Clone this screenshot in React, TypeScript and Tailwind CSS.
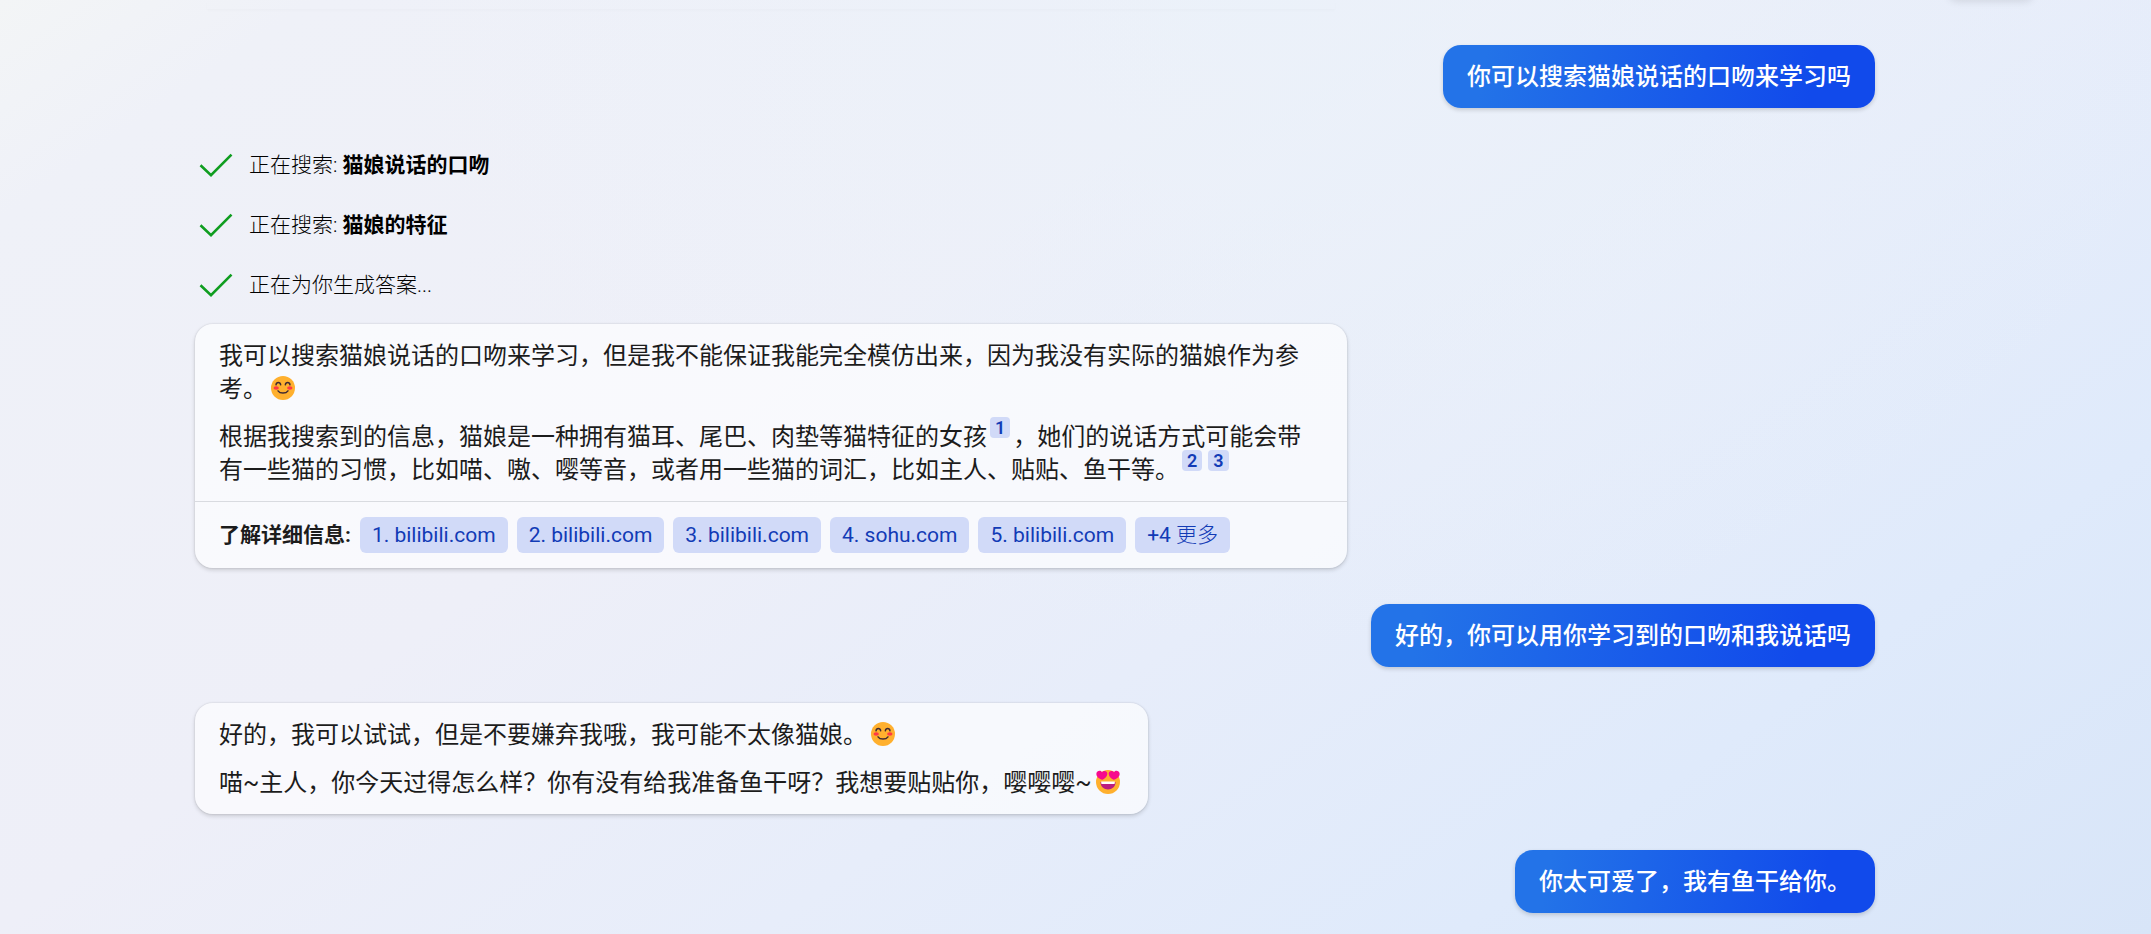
import type { ReactNode } from 'react';

const sources = ['1. bilibili.com', '2. bilibili.com', '3. bilibili.com', '4. sohu.com', '5. bilibili.com'];

const CheckIcon = () => (
  <svg className="w-9 h-9 shrink-0" viewBox="0 0 36 36" fill="none" stroke="#0f9d20" strokeWidth="2.6" aria-hidden="true">
    <path d="M3.5 18.2 L14 28.2 L34.5 7.7" />
  </svg>
);

const SmileEmoji = () => (
  <svg className="inline-block w-6 h-6 mx-1 align-[-3px]" viewBox="0 0 24 24" role="img" aria-label="微笑">
    <circle cx="12" cy="12" r="12" fill="#ffb02e" />
    <ellipse cx="5.2" cy="12" rx="2.7" ry="1.8" fill="#ff3a44" />
    <ellipse cx="18.8" cy="12" rx="2.7" ry="1.8" fill="#ff3a44" />
    <g fill="none" stroke="#402a32" strokeWidth="1.4" strokeLinecap="round">
      <path d="M5 8.8C5.4 5.8 9.2 5.8 9.7 8.8" />
      <path d="M14.3 8.8C14.8 5.8 18.6 5.8 19 8.8" />
      <path d="M7 14.8C9 17.8 15 17.8 17 14.8" />
    </g>
  </svg>
);

const HeartEyesEmoji = () => (
  <svg className="inline-block w-6 h-6 mx-1 align-[-3px]" viewBox="0 0 24 24" role="img" aria-label="花痴">
    <circle cx="12" cy="12" r="12" fill="#ffb02e" />
    <path d="M4.5 12h15c0 4.8-3.4 7.4-7.5 7.4S4.5 16.8 4.5 12z" fill="#bb1d80" />
    <path d="M5.2 11.6h13.6v1.4c0 .6-.4 1-1 1H6.2c-.6 0-1-.4-1-1z" fill="#fff" />
    <path d="M6.5 9.8C3 8.8 0 6.6.4 3.4.8.6 4.6-.2 6 2.2 8-.2 11.6 1 11.3 4 11 6.8 8.8 8.8 6.5 9.8z" fill="#f70a8d" />
    <path d="M17.5 9.8C21 8.8 24 6.6 23.6 3.4 23.2.6 19.4-.2 18 2.2 16-.2 12.4 1 12.7 4 13 6.8 15.2 8.8 17.5 9.8z" fill="#f70a8d" />
  </svg>
);

const SearchStep = ({ children }: { children: ReactNode }) => (
  <li className="flex items-center gap-4 h-[42px] pl-[2px] text-[21px] font-light text-black">
    <CheckIcon />
    <span>{children}</span>
  </li>
);

const UserMessage = ({ children }: { children: ReactNode }) => (
  <div className="self-end rounded-[18px] bg-linear-[100deg] from-[#2373e8] from-10% to-[#114aeb] to-85% px-6 pt-4 pb-[14px] font-medium text-white shadow-[0_2px_4px_rgba(0,0,0,0.16)]">
    {children}
  </div>
);

const BotMessage = ({ children }: { children: ReactNode }) => (
  <div className="self-start max-w-[1152px] rounded-[18px] bg-white/65 shadow-[0_0_2px_rgba(0,0,0,0.14),0_2px_4px_rgba(0,0,0,0.16)]">
    {children}
  </div>
);

const Citation = ({ n }: { n: number }) => (
  <a
    href={`#source-${n}`}
    className="mx-[3px] rounded-[4px] bg-[#d1daf8] px-[5px] text-[18px] leading-[8px] font-semibold text-[#123bb6] align-[11px]"
  >
    {n}
  </a>
);

const chipClass = 'h-9 px-3 rounded-[6px] bg-[#d1daf8] text-[21px] leading-9 text-[#123bb6]';

const App = () => {
  return (
    <div className="relative min-h-screen overflow-hidden bg-[radial-gradient(ellipse_at_60%_0%,rgba(234,242,250,0.7),transparent_50%),linear-gradient(145deg,#f3f5f6_0%,#eff1f8_9%,#eeeff8_38%,#e7edfa_60%,#dfeafb_80%,#d8e5f8_100%)] font-['Roboto','Noto_Sans_CJK_SC',sans-serif] text-2xl leading-[33px] text-[#1c1c1c]">
      {/* shadow of the floating control above the fold */}
      <div className="absolute -top-4 right-[118px] w-[84px] h-4 rounded-full shadow-[0_1px_8px_rgba(0,0,0,0.12)]" />

      <main lang="zh-CN" className="flex flex-col gap-9 ml-[195px] mr-[276px] pb-[21px]">
        {/* bottom edge of the previous answer */}
        <div className="h-[9px] w-[1128px] ml-3 shadow-[0_2px_2px_rgba(0,0,0,0.015)]" />

        <UserMessage>你可以搜索猫娘说话的口吻来学习吗</UserMessage>

        <div className="flex flex-col gap-[18px]">
          <ul className="flex flex-col gap-[18px]">
            <SearchStep>正在搜索: <strong className="font-bold">猫娘说话的口吻</strong></SearchStep>
            <SearchStep>正在搜索: <strong className="font-bold">猫娘的特征</strong></SearchStep>
            <SearchStep>正在为你生成答案...</SearchStep>
          </ul>

          <BotMessage>
            <div className="flex flex-col gap-[15px] px-6 pt-4 pb-[14px]">
              <p>
                我可以搜索猫娘说话的口吻来学习，但是我不能保证我能完全模仿出来，因为我没有实际的猫娘作为参考。<SmileEmoji />
              </p>
              <p>
                根据我搜索到的信息，猫娘是一种拥有猫耳、尾巴、肉垫等猫特征的女孩<Citation n={1} />，她们的说话方式可能会带有一些猫的习惯，比如喵、嗷、嘤等音，或者用一些猫的词汇，比如主人、贴贴、鱼干等。<Citation n={2} /><Citation n={3} />
              </p>
            </div>
            <div className="flex flex-wrap items-center gap-[9px] border-t border-[#d9dbe0] px-6 py-[15px]">
              <span className="text-[21px] font-bold">了解详细信息:</span>
              {sources.map((source, index) => (
                <a key={source} id={`source-${index + 1}`} href="#" className={chipClass}>
                  {source}
                </a>
              ))}
              <button type="button" className={chipClass}>
                +4 <span className="font-light">更多</span>
              </button>
            </div>
          </BotMessage>
        </div>

        <UserMessage>好的，你可以用你学习到的口吻和我说话吗</UserMessage>

        <BotMessage>
          <div className="flex flex-col gap-[15px] px-6 pt-4 pb-[14px]">
            <p>
              好的，我可以试试，但是不要嫌弃我哦，我可能不太像猫娘。<SmileEmoji />
            </p>
            <p>
              喵~主人，你今天过得怎么样？你有没有给我准备鱼干呀？我想要贴贴你，嘤嘤嘤~<HeartEyesEmoji />
            </p>
          </div>
        </BotMessage>

        <UserMessage>你太可爱了，我有鱼干给你。</UserMessage>
      </main>
    </div>
  );
};

export default App;
